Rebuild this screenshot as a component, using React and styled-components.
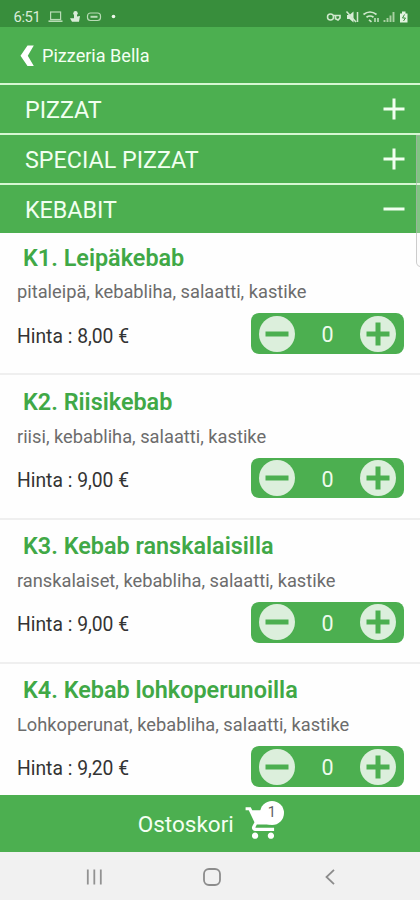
import React from 'react';
import { useState } from 'react';
import { styled, createGlobalStyle } from 'styled-components';
import { MdShoppingCart } from 'react-icons/md';

const GREEN = '#4caf50';

const GlobalStyle = createGlobalStyle`
    * {
        box-sizing: border-box;
    }

    body {
        margin: 0;
        font-family: Roboto, 'Liberation Sans', sans-serif;
        background-color: #fff;
    }

    p, h2 {
        margin: 0;
    }
`;

const Screen = styled.div`
    position: relative;
    display: flex;
    flex-direction: column;
    width: 420px;
    height: 900px;
    overflow: hidden;
    background-color: #fefefe;
`;

const StatusBar = styled.div`
    display: flex;
    justify-content: space-between;
    align-items: center;
    height: 26.5px;
    padding: 7px 10px 0 13.5px;
    background-color: #388e3c;
    color: #d9ecd8;
    flex-shrink: 0;
`;

const StatusGroup = styled.div`
    display: flex;
    align-items: center;
    gap: 7px;
`;

const Clock = styled.span`
    font-size: 14.8px;
    line-height: 18px;
    letter-spacing: -0.4px;
    width: 27px;
`;

const Header = styled.header`
    display: flex;
    align-items: center;
    gap: 8px;
    height: 56.5px;
    padding: 2px 20px 0;
    background-color: ${GREEN};
    color: #f4fff2;
    flex-shrink: 0;
`;

const HeaderTitle = styled.span`
    font-size: 18.1px;
    line-height: 24px;
`;

const Category = styled.div`
    display: flex;
    justify-content: space-between;
    align-items: center;
    height: 50px;
    padding: 0 15px 0 25px;
    border-top: 2.5px solid #d6f7d2;
    background-color: ${GREEN};
    color: #f1fff0;
    cursor: pointer;
    flex-shrink: 0;
`;

const CategoryName = styled.h2`
    font-size: 23.3px;
    font-weight: 400;
    line-height: 28px;
    padding-top: 2.5px;
`;

const List = styled.div`
    flex: 1;
    min-height: 0;
    overflow: hidden;
`;

const Item = styled.div`
    height: 144.2px;
    padding: 12.6px 16px 0 17px;
    border-bottom: 2px solid #efefef;

    &:first-child {
        height: 142.4px;
        padding-top: 10.6px;
    }
`;

const ItemTitle = styled.h2`
    padding-left: 6px;
    font-size: 23.4px;
    font-weight: 600;
    line-height: 28px;
    color: #40a846;
`;

const Description = styled.p`
    margin-top: 8.9px;
    font-size: 18.25px;
    line-height: 24px;
    color: #6c6c6c;
`;

const PriceRow = styled.div`
    display: flex;
    justify-content: space-between;
    align-items: center;
    margin-top: 9px;
`;

const Price = styled.p`
    padding-top: 5.6px;
    font-size: 19.3px;
    line-height: 24px;
    color: #333;
`;

const Stepper = styled.div`
    display: flex;
    justify-content: space-between;
    align-items: center;
    width: 153.5px;
    height: 40.5px;
    padding: 0 8.5px 0 8px;
    border-radius: 8px;
    background-color: ${GREEN};
`;

const RoundButton = styled.button`
    display: flex;
    width: 36px;
    height: 36px;
    padding: 0;
    border: none;
    border-radius: 50%;
    background-color: #dcefdc;
    cursor: pointer;
`;

const Amount = styled.span`
    padding: 3px 0 0 1px;
    font-size: 21.5px;
    line-height: 24px;
    color: #eefbec;
`;

const CartBar = styled.div`
    display: flex;
    justify-content: center;
    align-items: center;
    gap: 10.5px;
    height: 56.5px;
    background-color: ${GREEN};
    color: #f4fff2;
    flex-shrink: 0;
`;

const CartLabel = styled.span`
    font-size: 22.5px;
    line-height: 28px;
    padding-top: 1px;
`;

const CartIcon = styled.div`
    position: relative;
    display: flex;
    color: #fff;
`;

const Badge = styled.span`
    position: absolute;
    top: -3px;
    left: 15.5px;
    width: 24px;
    height: 24px;
    border-radius: 50%;
    background-color: #fff;
    color: #606060;
    font-size: 14.5px;
    line-height: 24px;
    text-align: center;
`;

const NavBar = styled.nav`
    display: flex;
    justify-content: space-between;
    align-items: center;
    height: 48.5px;
    padding: 1.5px 85.5px 0 86px;
    background-color: #f1f1f1;
    flex-shrink: 0;
`;

const HomeIcon = styled.svg`
    margin-right: 4px;
`;

const ScrollHandle = styled.div`
    position: absolute;
    top: 135px;
    right: -8px;
    width: 12px;
    height: 132px;
    border: 1.5px solid rgba(170, 170, 170, 0.6);
    border-radius: 0 0 0 5px;
    background-color: rgba(250, 250, 250, 0.3);
`;

const items = [
    { title: 'K1. Leipäkebab', description: 'pitaleipä, kebabliha, salaatti, kastike', price: '8,00' },
    { title: 'K2. Riisikebab', description: 'riisi, kebabliha, salaatti, kastike', price: '9,00' },
    { title: 'K3. Kebab ranskalaisilla', description: 'ranskalaiset, kebabliha, salaatti, kastike', price: '9,00' },
    { title: 'K4. Kebab lohkoperunoilla', description: 'Lohkoperunat, kebabliha, salaatti, kastike', price: '9,20' },
];

const ToggleIcon = ({ open }) => (
    <svg width="22" height="22" viewBox="0 0 22 22" stroke="#f1fff0" strokeWidth="3">
        <path d={open ? 'M0.5 11H21.5' : 'M0.5 11H21.5M11 0.5V21.5'} />
    </svg>
);

const StepIcon = ({ plus }) => (
    <svg width="36" height="36" viewBox="0 0 36 36" stroke={GREEN} strokeWidth="5">
        <path d={plus ? 'M6.5 18H29.5M18 6.5V29.5' : 'M6.5 18H29.5'} />
    </svg>
);

const MenuItem = ({ title, description, price }) => {
    const [amount, setAmount] = useState(0);

    return (
        <Item>
            <ItemTitle>{title}</ItemTitle>
            <Description>{description}</Description>
            <PriceRow>
                <Price>Hinta : {price} €</Price>
                <Stepper>
                    <RoundButton onClick={() => setAmount(Math.max(0, amount - 1))}>
                        <StepIcon />
                    </RoundButton>
                    <Amount>{amount}</Amount>
                    <RoundButton onClick={() => setAmount(amount + 1)}>
                        <StepIcon plus />
                    </RoundButton>
                </Stepper>
            </PriceRow>
        </Item>
    );
};

const StatusLeft = () => (
    <svg width="70" height="14" viewBox="0 0 70 14" fill="none" stroke="#b9dcb6" strokeWidth="1.2">
        {/* laptop */}
        <rect x="2.6" y="2" width="10" height="7.5" />
        <path d="M0.5 11.2H14.5" strokeWidth="1.6" />
        {/* notification */}
        <circle cx="27.5" cy="3.2" r="2.2" fill="#d9ecd8" stroke="none" />
        <path d="M26 4h3v2.5l3-.5-1 5.8h-7l-2-3.600h4z" fill="#d9ecd8" stroke="none" />
        {/* game pad */}
        <rect x="39.500" y="3" width="13" height="7.500" rx="3" />
        <path d="M42.500 6.800h7" strokeWidth="2" />
        <circle cx="65.500" cy="6.500" r="1.800" fill="#eef8ec" stroke="none" />
    </svg>
);

const StatusRight = () => (
    <svg width="84" height="16" viewBox="0 0 84 16" fill="none" stroke="#cfe8cc" strokeWidth="1.500">
        {/* vpn key */}
        <circle cx="4.500" cy="8" r="3" />
        <path d="M7.500 6.500h6.500v2.500l-2 2-2.500-1.200V7" strokeWidth="1.700" />
        {/* muted speaker */}
        <path d="M21 6h2.500l4-3.500v11l-4-3.500H21z" fill="#d9ecd8" stroke="none" />
        <path d="M20.500 2.500L30 13M31.500 3v10" />
        {/* wifi */}
        <path d="M37.500 5.500q6.500-5 13 0M40.500 8.300q3.500-2.600 7 0M43 10.800l2.500 2" strokeWidth="1.700" />
        <path d="M49 9v4M52 9v4" strokeWidth="1.400" />
        {/* signal */}
        <path d="M58.500 13v-2M61.500 13V9M64.500 13V6.500M67.500 13V3" strokeWidth="1.900" stroke="#a9d1a2" />
        {/* battery */}
        <path d="M74 4.500h2V2.500h3.500V4.500h2v9h-7.500z" fill="#e2f3df" stroke="none" />
        <path d="M78.500 5.500l-2 3.500h3l-2 3" stroke="#388e3c" strokeWidth="1" />
    </svg>
);

const App = () => {
    return (
        <>
            <GlobalStyle />
            <Screen>
                <StatusBar>
                    <StatusGroup>
                        <Clock>6:51</Clock>
                        <StatusLeft />
                    </StatusGroup>
                    <StatusRight />
                </StatusBar>
                <Header>
                    <svg width="14" height="22" viewBox="0 0 14 22" fill="#fff">
                        <path d="M7.500 0.500H13.800L7.800 10.800L13.800 21H7.500L0.500 10.800z" />
                    </svg>
                    <HeaderTitle>Pizzeria Bella</HeaderTitle>
                </Header>
                <Category>
                    <CategoryName>PIZZAT</CategoryName>
                    <ToggleIcon />
                </Category>
                <Category>
                    <CategoryName>SPECIAL PIZZAT</CategoryName>
                    <ToggleIcon />
                </Category>
                <Category>
                    <CategoryName>KEBABIT</CategoryName>
                    <ToggleIcon open />
                </Category>
                <List>
                    {items.map((item) => (
                        <MenuItem key={item.title} {...item} />
                    ))}
                </List>
                <CartBar>
                    <CartLabel>Ostoskori</CartLabel>
                    <CartIcon>
                        <MdShoppingCart size={38} />
                        <Badge>1</Badge>
                    </CartIcon>
                </CartBar>
                <NavBar>
                    <svg width="17" height="18" viewBox="0 0 17 18" stroke="#929292" strokeWidth="1.800">
                        <path d="M1.800 1.500V16.500M8.300 1.500V16.500M14.800 1.500V16.500" />
                    </svg>
                    <HomeIcon width="18" height="18" viewBox="0 0 18 18" fill="none" stroke="#8c8c8c" strokeWidth="1.800">
                        <rect x="1" y="1" width="16" height="16" rx="5" />
                    </HomeIcon>
                    <svg width="10" height="18" viewBox="0 0 10 18" fill="none" stroke="#8c8c8c" strokeWidth="1.800">
                        <path d="M9 1.800L1.500 9L9 16.200" />
                    </svg>
                </NavBar>
                <ScrollHandle />
            </Screen>
        </>
    );
};

export default App;
